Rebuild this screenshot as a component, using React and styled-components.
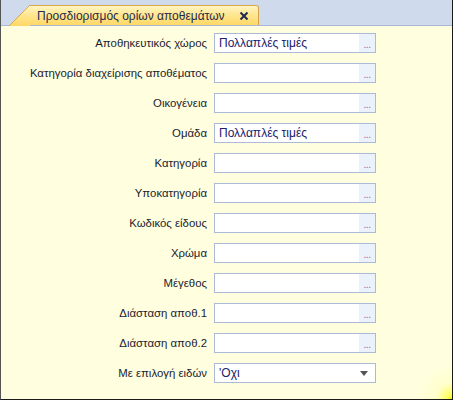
import React from 'react'
import styled, { createGlobalStyle } from 'styled-components';

const GlobalStyle = createGlobalStyle`
    body {
        margin: 0;
        font-family: "Liberation Sans", Arial, sans-serif;
    }
`

const fields = [
    { label: 'Αποθηκευτικός χώρος', value: 'Πολλαπλές τιμές' },
    { label: 'Κατηγορία διαχείρισης αποθέματος', value: '' },
    { label: 'Οικογένεια', value: '' },
    { label: 'Ομάδα', value: 'Πολλαπλές τιμές' },
    { label: 'Κατηγορία', value: '' },
    { label: 'Υποκατηγορία', value: '' },
    { label: 'Κωδικός είδους', value: '' },
    { label: 'Χρώμα', value: '' },
    { label: 'Μέγεθος', value: '' },
    { label: 'Διάσταση αποθ.1', value: '' },
    { label: 'Διάσταση αποθ.2', value: '' },
]

const App = () => {
    return (
        <>
            <GlobalStyle />
            <Window>
                <TabStrip>
                    <Tab>
                        <TabTitle>Προσδιορισμός ορίων αποθεμάτων</TabTitle>
                        <svg width="10" height="10" viewBox="0 0 10 10">
                            <path d="M1.5 1.5 L8.5 8.5 M8.5 1.5 L1.5 8.5" stroke="#1f2a4f" strokeWidth="2" />
                        </svg>
                    </Tab>
                </TabStrip>
                <Panel>
                    <Form>
                        {fields.map(f => (
                            <React.Fragment key={f.label}>
                                <Label>{f.label}</Label>
                                <Field>
                                    <FieldText>{f.value}</FieldText>
                                    <Ellipsis>...</Ellipsis>
                                </Field>
                            </React.Fragment>
                        ))}
                        <Label>Με επιλογή ειδών</Label>
                        <Field>
                            <FieldText>'Οχι</FieldText>
                            <Arrow />
                        </Field>
                    </Form>
                </Panel>
            </Window>
        </>
    )
}

const Window = styled.div`
    width: 453px;
    height: 400px;
    box-sizing: border-box;
    border: 1px solid #1a1a1a;
    border-top: none;
    border-left-color: #555;
    display: flex;
    flex-direction: column;
    overflow: hidden;
`

const TabStrip = styled.div`
    height: 25px;
    flex-shrink: 0;
    background: #cfdbec;
    border-bottom: 1px solid #a8b9d5;
    display: flex;
    align-items: flex-end;
    padding-left: 29px;
`

const Tab = styled.div`
    position: relative;
    height: 20px;
    box-sizing: border-box;
    padding: 0 9px 0 7px;
    display: flex;
    align-items: center;
    gap: 14px;
    background: linear-gradient(to bottom, #fff5c2 0%, #ffe68e 50%, #ffd866 100%);
    border-top: 1px solid #dca64a;
    border-right: 1px solid #d5a24c;
    border-top-right-radius: 3px;
    svg {
        margin-top: 1px;
    }
    &::before {
        content: '';
        position: absolute;
        left: -21px;
        top: -1px;
        width: 21px;
        height: 21px;
        background:
            linear-gradient(to top left, transparent calc(50% - 0.7px), #dca64a calc(50% - 0.7px), #dca64a calc(50% + 0.7px), #cfdbec calc(50% + 0.7px)),
            linear-gradient(to bottom, #fff5c2 0%, #ffe68e 50%, #ffd866 100%);
    }
`

const TabTitle = styled.span`
    font-size: 12px;
    color: #1f2a4f;
    white-space: nowrap;
`

const Panel = styled.div`
    flex: 1;
    background:
        radial-gradient(circle at 100% 100%, #f0f000 0px, #ffff66 5px, rgba(255, 255, 190, 0.6) 16px, rgba(255, 255, 224, 0) 36px),
        #ffffe0;
`

const Form = styled.div`
    display: grid;
    grid-template-columns: 206px 162px;
    grid-auto-rows: 20px;
    column-gap: 7px;
    row-gap: 10px;
    padding-top: 7px;
`

const Label = styled.div`
    font-size: 11.4px;
    color: #1b1b2e;
    text-align: right;
    line-height: 20px;
    white-space: nowrap;
`

const Field = styled.div`
    display: flex;
    align-items: stretch;
    box-sizing: border-box;
    border: 1px solid #abbbd7;
    background: #fff;
`

const FieldText = styled.div`
    flex: 1;
    font-size: 12px;
    color: #22206a;
    line-height: 18px;
    padding-left: 4px;
    white-space: nowrap;
`

const Ellipsis = styled.div`
    width: 16px;
    background: #ecf2fb;
    color: #8a6aa8;
    font-size: 10px;
    line-height: 22px;
    text-align: center;
    letter-spacing: -0.5px;
`

const Arrow = styled.div`
    width: 0;
    height: 0;
    align-self: center;
    margin-right: 7px;
    border-left: 4px solid transparent;
    border-right: 4px solid transparent;
    border-top: 5px solid #555;
`

export default App
